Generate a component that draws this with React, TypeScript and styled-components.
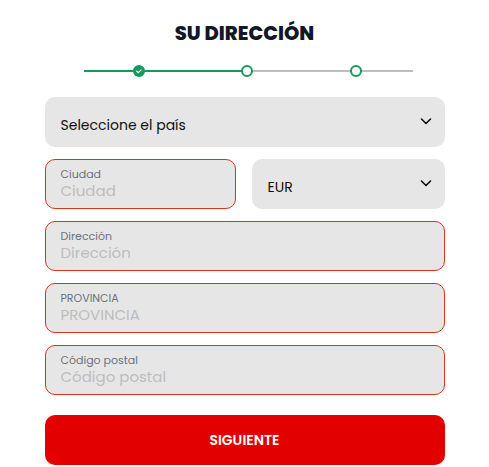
import React from "react";
import styled, { createGlobalStyle } from "styled-components";

const GlobalStyle = createGlobalStyle`
  body {
    margin: 0;
    background: #ffffff;
    font-family: "Poppins", Inter, "Noto Sans", sans-serif;
  }
`;

const Container = styled.div`
  width: 400px;
  margin: 0 auto;
  padding-top: 22px;
  display: flex;
  flex-direction: column;
`;

const Title = styled.h1`
  margin: 0;
  text-align: center;
  font-size: 19.5px;
  line-height: 24px;
  font-weight: 800;
  color: #111827;
`;

const Stepper = styled.svg`
  display: block;
  margin: 18px 0 0 39px;
`;

const Form = styled.div`
  margin-top: 19px;
  display: flex;
  flex-direction: column;
  gap: 12px;
`;

const Row = styled.div`
  display: grid;
  grid-template-columns: 191px 1fr;
  gap: 16px;
`;

const SelectBox = styled.div`
  height: 50px;
  flex-shrink: 0;
  box-sizing: border-box;
  border-radius: 10px;
  background: #e6e6e6;
  display: flex;
  align-items: center;
  justify-content: space-between;
  padding: 6px 12px 0 16px;
  font-size: 14px;
  color: #111111;
`;

const Chevron = styled.svg`
  margin-top: -8px;
`;

const Field = styled.label`
  height: 50px;
  flex-shrink: 0;
  box-sizing: border-box;
  border-radius: 10px;
  background: #e6e6e6;
  border: 1px solid #d9341a;
  padding: 7px 15px 0;
  display: flex;
  flex-direction: column;
  min-width: 0;
`;

const Label = styled.span`
  font-size: 11px;
  line-height: 15px;
  color: #6b7280;
`;

const Input = styled.input`
  border: none;
  outline: none;
  background: transparent;
  padding: 0;
  min-width: 0;
  font-family: inherit;
  font-size: 15px;
  line-height: 18px;
  color: #111;
  &::placeholder {
    color: #bdbdbd;
  }
`;

const Button = styled.button`
  margin-top: 8px;
  height: 50px;
  flex-shrink: 0;
  border: none;
  border-radius: 10px;
  background: #e30000;
  color: #ffffff;
  font-family: inherit;
  font-size: 14px;
  font-weight: 600;
`;

const ChevronDown = () => (
  <Chevron width="14" height="14" viewBox="0 0 14 14" fill="none">
    <path d="M2.5 5l4.5 4.5L11.5 5" stroke="#111" strokeWidth="1.6" strokeLinecap="round" strokeLinejoin="round" />
  </Chevron>
);

const TextField: React.FC<{ label: string }> = ({ label }) => (
  <Field>
    <Label>{label}</Label>
    <Input placeholder={label} />
  </Field>
);

const App: React.FC = () => {
  return (
    <Container>
      <GlobalStyle />
      <Title>SU DIRECCIÓN</Title>
      <Stepper width="329" height="14" viewBox="0 0 329 14">
        <line x1="0" y1="7" x2="163" y2="7" stroke="#159a5b" strokeWidth="2" />
        <line x1="163" y1="7" x2="329" y2="7" stroke="#bdbdbd" strokeWidth="2" />
        <circle cx="55" cy="7" r="6" fill="#159a5b" />
        <path d="M52.6 7.2l1.6 1.5 2.9-2.9" stroke="#fff" strokeWidth="1.1" fill="none" strokeLinecap="round" />
        <circle cx="163" cy="7" r="5" fill="#fff" stroke="#159a5b" strokeWidth="2" />
        <circle cx="272" cy="7" r="5" fill="#fff" stroke="#159a5b" strokeWidth="2" />
      </Stepper>
      <Form>
        <SelectBox>
          <span>Seleccione el país</span>
          <ChevronDown />
        </SelectBox>
        <Row>
          <TextField label="Ciudad" />
          <SelectBox>
            <span>EUR</span>
            <ChevronDown />
          </SelectBox>
        </Row>
        <TextField label="Dirección" />
        <TextField label="PROVINCIA" />
        <TextField label="Código postal" />
        <Button>SIGUIENTE</Button>
      </Form>
    </Container>
  );
};

export default App;
